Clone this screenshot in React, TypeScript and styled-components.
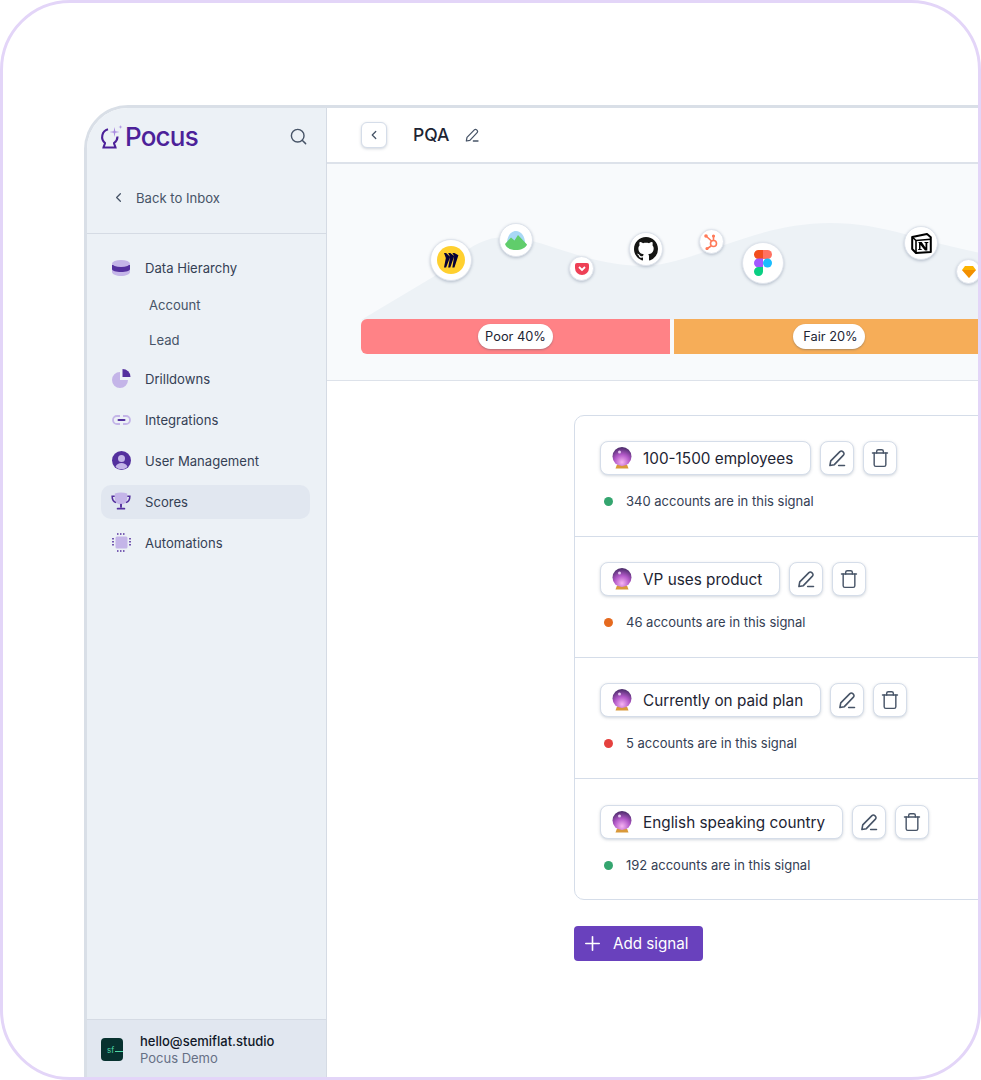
import { createGlobalStyle, styled, css } from 'styled-components';
import type { ReactNode } from 'react';
import { Search, ChevronLeft, Plus, Trash } from 'lucide-react';

const GlobalStyle = createGlobalStyle`
  html, body {
    margin: 0;
    padding: 0;
    background: #fff;
  }
  * {
    box-sizing: border-box;
  }
`;

const Frame = styled.div`
  width: 981px;
  height: 1080px;
  border: 3px solid #e3d5f8;
  border-radius: 70px;
  padding: 102px 0 0 81px;
  overflow: hidden;
  background: #fff;
  font-family: Inter, 'Liberation Sans', sans-serif;
`;

const AppWindow = styled.div`
  display: flex;
  height: 974px;
  width: 900px;
  border-top: 3px solid #d9dfe7;
  border-left: 3px solid #d9dfe7;
  border-top-left-radius: 44px;
  overflow: hidden;
`;

const Sidebar = styled.aside`
  width: 240px;
  flex-shrink: 0;
  display: flex;
  flex-direction: column;
  background: #ecf1f6;
  border-right: 1px solid #d5dbe4;
`;

const Brand = styled.div`
  display: flex;
  align-items: center;
  justify-content: space-between;
  height: 57px;
  padding: 0 18px 0 13px;
`;

const BrandName = styled.div`
  display: flex;
  align-items: center;
  gap: 1px;
  font-size: 26px;
  font-weight: 500;
  letter-spacing: -0.8px;
  color: #4c2199;
`;

const BackLink = styled.div`
  display: flex;
  align-items: center;
  gap: 10px;
  height: 69px;
  padding: 0 0 3px 24px;
  border-bottom: 1px solid #d5dbe4;
  font-size: 13.1px;
  color: #475467;
`;

const NavList = styled.nav`
  flex: 1;
  display: flex;
  flex-direction: column;
  padding-top: 16px;
`;

const NavRow = styled.div<{ $active?: boolean }>`
  display: flex;
  align-items: center;
  gap: 14px;
  height: 35px;
  margin: 0 16px 6px 14px;
  padding-left: 10px;
  border-radius: 10px;
  font-size: 13.1px;
  color: #344054;

  ${(p) =>
    p.$active &&
    css`
      height: 34px;
      margin-top: 1px;
      padding-bottom: 1px;
      background: #e1e7f0;
    `}
`;

const NavIcon = styled.span`
  width: 20px;
  height: 20px;
  display: flex;
  align-items: center;
  justify-content: center;
`;

const SubRow = styled.div`
  height: 35px;
  display: flex;
  align-items: center;
  padding-left: 62px;
  font-size: 13.1px;
  color: #475467;
`;

const SubGroup = styled.div`
  margin: -4px 0 4px;
`;

const Account = styled.div`
  display: flex;
  align-items: center;
  gap: 17px;
  height: 60px;
  padding-left: 14px;
  background: #e1e7f0;
  border-top: 1px solid #d5dbe4;
`;

const AccountLogo = styled.div`
  position: relative;
  width: 22px;
  height: 23px;
  border-radius: 4px;
  background: #07312f;
  color: #4fd8a8;
  font-size: 8px;
  display: flex;
  align-items: center;
  padding-left: 6px;

  &::after {
    content: '';
    position: absolute;
    left: 14px;
    right: 0;
    top: 13px;
    height: 1px;
    background: #4fd8a8;
  }
`;

const AccountText = styled.div`
  display: flex;
  flex-direction: column;
  gap: 1px;
  font-size: 13px;
  line-height: 16px;
  color: #101828;
  font-weight: 500;
`;

const AccountSub = styled.span`
  font-weight: 400;
  color: #667085;
`;

const Main = styled.main`
  flex: 1;
  min-width: 0;
  display: flex;
  flex-direction: column;
`;

const TopBar = styled.header`
  display: flex;
  align-items: center;
  height: 56px;
  padding-left: 34px;
  border-bottom: 2px solid #dde2ea;
  background: #fff;
`;

const IconButton = styled.button<{ $size: number }>`
  width: ${(p) => p.$size}px;
  height: ${(p) => p.$size}px;
  padding: 0;
  display: flex;
  align-items: center;
  justify-content: center;
  background: #fff;
  color: #475467;
  border: 1px solid #d5dde9;
  border-radius: ${(p) => (p.$size > 30 ? 8 : 6)}px;
  box-shadow: 0 1px 3px rgba(100, 116, 139, 0.3);
`;

const PageTitle = styled.h1`
  margin: -2px 15px 0 26px;
  font-size: 17.5px;
  font-weight: 500;
  color: #1d2433;
`;

const TitleEdit = styled.span`
  display: flex;
  color: #475467;
`;

const ScoreHero = styled.section`
  position: relative;
  height: 217px;
  background: #f8fafc;
  border-bottom: 1px solid #dde2ea;
`;

const Wave = styled.svg`
  position: absolute;
  left: 0;
  top: 0;
`;

const BarRow = styled.div`
  position: absolute;
  left: 34px;
  top: 155px;
  display: flex;
  gap: 4px;
  height: 35px;
`;

const BarSegment = styled.div<{ $color: string; $width: number; $first?: boolean }>`
  width: ${(p) => p.$width}px;
  display: flex;
  align-items: center;
  justify-content: center;
  background: ${(p) => p.$color};
  border-radius: ${(p) => (p.$first ? '6px 0 0 6px' : '0')};
`;

const BarLabel = styled.span<{ $padLeft: number }>`
  display: flex;
  align-items: center;
  height: 25px;
  padding: 0 7px 0 ${(p) => p.$padLeft}px;
  background: #fff;
  border-radius: 13px;
  font-size: 12.8px;
  color: #1d2433;
  box-shadow: 0 1px 2px rgba(71, 84, 103, 0.4);
`;

const LogoBubble = styled.div<{ $x: number; $y: number; $size: number }>`
  position: absolute;
  left: ${(p) => p.$x}px;
  top: ${(p) => p.$y}px;
  width: ${(p) => p.$size}px;
  height: ${(p) => p.$size}px;
  display: flex;
  align-items: center;
  justify-content: center;
  border-radius: 50%;
  background: #fff;
  border: 1px solid #dfe4ec;
  box-shadow: 0 1px 3px rgba(100, 116, 139, 0.4);
`;

const Content = styled.div`
  padding: 34px 0 0 247px;
`;

const SignalCard = styled.div`
  width: 500px;
  border: 1px solid #d5dde9;
  border-radius: 10px;
  background: #fff;
`;

const SignalBlock = styled.div`
  height: 121px;
  padding: 25px 25px 0;
  border-bottom: 1px solid #d5dde9;

  &:last-child {
    height: 120px;
    padding-top: 26px;
    border-bottom: none;
  }
`;

const SignalRow = styled.div`
  display: flex;
  gap: 9px;
`;

const SignalChip = styled.div`
  display: flex;
  align-items: center;
  height: 34px;
  padding: 0 17px 0 11px;
  gap: 11px;
  background: #fff;
  border: 1px solid #d5dde9;
  border-radius: 8px;
  box-shadow: 0 1px 3px rgba(100, 116, 139, 0.3);
  font-size: 15.32px;
  color: #1d2433;
`;

const CountLine = styled.div`
  display: flex;
  align-items: center;
  gap: 13px;
  margin-top: 17px;
  padding-left: 4px;
  height: 18px;
  font-size: 13px;
  color: #344054;
`;

const Dot = styled.span<{ $color: string }>`
  width: 9px;
  height: 9px;
  border-radius: 50%;
  background: ${(p) => p.$color};
`;

const AddButton = styled.button`
  display: flex;
  align-items: center;
  gap: 9px;
  height: 35px;
  margin-top: 26px;
  padding: 0 14px 0 7px;
  border: none;
  border-radius: 4px;
  background: #6941bd;
  color: #fff;
  font-family: inherit;
  font-size: 15.2px;
`;

function CrystalBall() {
  return (
    <svg width="20" height="22" viewBox="0 0 20 22">
      <defs>
        <radialGradient id="ball" cx="0.5" cy="0.8" r="0.8">
          <stop offset="0" stopColor="#f6b4f2" />
          <stop offset="0.5" stopColor="#b258c8" />
          <stop offset="1" stopColor="#472a66" />
        </radialGradient>
      </defs>
      <path d="M5 17.500h10l1.500 4h-13z" fill="#d9993a" />
      <circle cx="10" cy="9.500" r="9.500" fill="url(#ball)" />
      <circle cx="7.500" cy="5" r="1.500" fill="#e6c8f0" />
    </svg>
  );
}

function PenIcon({ size }: { size: number }) {
  return (
    <svg width={size} height={size} viewBox="0 0 24 24" fill="none" stroke="currentColor" strokeWidth="1.900" strokeLinecap="round" strokeLinejoin="round">
      <path d="M3.500 21l1-5.500L15.500 4.300a2.400 2.400 0 0 1 3.400 0l.8.8a2.400 2.400 0 0 1 0 3.400L8.800 20z" />
      <path d="M14 21h7" />
    </svg>
  );
}

const navIcons: Record<string, ReactNode> = {
  data: (
    <svg width="18" height="16" viewBox="0 0 18 16">
      <path d="M0 4v8c0 2 4 4 9 4s9-2 9-4V4z" fill="#c4b5e8" />
      <path d="M0 5v4c0 2 4 3 9 3s9-1 9-3V5z" fill="#54309e" />
      <ellipse cx="9" cy="3.500" rx="9" ry="3.500" fill="#c4b5e8" />
    </svg>
  ),
  drill: (
    <svg width="19" height="19" viewBox="0 0 19 19">
      <path d="M8 3a8 8 0 1 0 8 8H8z" fill="#c4b5e8" />
      <path d="M10.500 0a8 8 0 0 1 8 8h-8z" fill="#54309e" />
    </svg>
  ),
  link: (
    <svg width="19" height="10" viewBox="0 0 19 10" fill="none">
      <path d="M8 1H5a4 4 0 0 0 0 8h3M11 1h3a4 4 0 0 1 0 8h-3" stroke="#c4b5e8" strokeWidth="1.800" />
      <rect x="5.500" y="3.900" width="8" height="2.200" rx="1" fill="#54309e" />
    </svg>
  ),
  user: (
    <svg width="19" height="19" viewBox="0 0 19 19">
      <circle cx="9.500" cy="9.500" r="9.500" fill="#54309e" />
      <circle cx="9.500" cy="7.500" r="3.500" fill="#c4b5e8" />
      <path d="M3.500 16c1-3 3.500-4 6-4s5 1 6 4a9 9 0 0 1-12 0z" fill="#c4b5e8" />
    </svg>
  ),
  trophy: (
    <svg width="21" height="19" viewBox="0 0 21 19">
      <path d="M4 4H1.200c0 4 1.500 6 4.300 6.500M17 4h2.800c0 4-1.500 6-4.300 6.500" fill="none" stroke="#54309e" strokeWidth="1.600" />
      <path d="M4 1q6.500-2 13 0v5c0 4-3 6.500-6.500 6.500S4 10 4 6z" fill="#c4b5e8" />
      <rect x="9.500" y="12" width="2" height="4" fill="#54309e" />
      <rect x="6" y="16" width="9" height="2" rx="1" fill="#54309e" />
    </svg>
  ),
  chip: (
    <svg width="19" height="19" viewBox="0 0 19 19">
      <rect x="3.500" y="3.500" width="12" height="12" rx="1.500" fill="#c4b5e8" />
      <path d="M5 1h9M5 18h9M1 5v9M18 5v9" stroke="#54309e" strokeWidth="1.600" strokeDasharray="1.500 1.500" fill="none" />
    </svg>
  ),
};

const signals = [
  { name: '100-1500 employees', count: '340 accounts are in this signal', color: '#34a56f' },
  { name: 'VP uses product', count: '46 accounts are in this signal', color: '#e56a1f' },
  { name: 'Currently on paid plan', count: '5 accounts are in this signal', color: '#e5413e' },
  { name: 'English speaking country', count: '192 accounts are in this signal', color: '#34a56f' },
];

export default function App() {
  return (
    <Frame>
      <GlobalStyle />
      <AppWindow>
        <Sidebar>
          <Brand>
            <BrandName>
              <svg width="24" height="24" viewBox="0 0 24 24" fill="none">
                <path d="M8 4.200A8 8 0 0 0 5 18c0 1.500-1 2-1.500 4.500h12C15 20 14 19.500 14 18a8 8 0 0 0 3.500-6.500" stroke="#4c2199" strokeWidth="2.100" />
                <path d="M14.500 2l.8 4.200 4.200.8-4.200.8-.8 4.200-.8-4.200L9.500 7l4.200-.8z" fill="#a98be0" />
                <path d="M20.500 0l.4 1.600 1.600.4-1.600.4-.4 1.600-.4-1.600-1.600-.4 1.600-.4z" fill="#a98be0" />
              </svg>
              Pocus
            </BrandName>
            <Search size={19} color="#475467" strokeWidth={1.8} />
          </Brand>
          <BackLink>
            <ChevronLeft size={15} strokeWidth={2} />
            Back to Inbox
          </BackLink>
          <NavList>
            <NavRow><NavIcon>{navIcons.data}</NavIcon>Data Hierarchy</NavRow>
            <SubGroup>
              <SubRow>Account</SubRow>
              <SubRow>Lead</SubRow>
            </SubGroup>
            <NavRow><NavIcon>{navIcons.drill}</NavIcon>Drilldowns</NavRow>
            <NavRow><NavIcon>{navIcons.link}</NavIcon>Integrations</NavRow>
            <NavRow><NavIcon>{navIcons.user}</NavIcon>User Management</NavRow>
            <NavRow $active><NavIcon>{navIcons.trophy}</NavIcon>Scores</NavRow>
            <NavRow><NavIcon>{navIcons.chip}</NavIcon>Automations</NavRow>
          </NavList>
          <Account>
            <AccountLogo>sf</AccountLogo>
            <AccountText>
              hello@semiflat.studio
              <AccountSub>Pocus Demo</AccountSub>
            </AccountText>
          </Account>
        </Sidebar>
        <Main>
          <TopBar>
            <IconButton $size={26}><ChevronLeft size={14} strokeWidth={2.2} /></IconButton>
            <PageTitle>PQA</PageTitle>
            <TitleEdit><PenIcon size={16} /></TitleEdit>
          </TopBar>
          <ScoreHero>
            <Wave width="660" height="217" viewBox="0 0 660 217">
              <path d="M34 156L106 113C125 101 145 73 178 73C215 73 255 101 315 102C365 102 425 59 503 59C560 59 600 80 660 90V156Z" fill="#edf2f6" />
            </Wave>
            <BarRow>
              <BarSegment $color="#ff8286" $width={309} $first><BarLabel $padLeft={7}>Poor 40%</BarLabel></BarSegment>
              <BarSegment $color="#f6ad58" $width={310}><BarLabel $padLeft={10}>Fair 20%</BarLabel></BarSegment>
            </BarRow>
            <LogoBubble $x={103} $y={75} $size={42}>
              <svg width="28" height="28" viewBox="0 0 28 28">
                <circle cx="14" cy="14" r="14" fill="#ffd02f" />
                <g transform="translate(7 7) scale(0.6)">
                  <path d="M17.392 0H13.900L17 4.808 10.444 0H6.949l3.102 6.300L3.494 0H0l3.050 8.131L0 24h3.494L10.050 6.985 6.949 24h3.494L17 5.494 13.899 24h3.493L24 3.672 17.392 0z" fill="#050038" />
                </g>
              </svg>
            </LogoBubble>
            <LogoBubble $x={172} $y={59} $size={34}>
              <svg width="22" height="19" viewBox="0 0 22 19">
                <path d="M2 12C2 5 6 0 11 0s9 5 9 12z" fill="#a9d8f5" />
                <path d="M0 13l6-6.500 3.500 3L13 4l9 9.500C21 17 16 19 11 19S1 17 0 13z" fill="#60cd6b" />
              </svg>
            </LogoBubble>
            <LogoBubble $x={242} $y={92} $size={25}>
              <svg width="14" height="12" viewBox="0 0 14 12">
                <path d="M0 2a2 2 0 0 1 2-2h10a2 2 0 0 1 2 2v3a7 7 0 0 1-14 0z" fill="#ee4056" />
                <path d="M4 4l3 3 3-3" stroke="#fff" strokeWidth="1.800" fill="none" />
              </svg>
            </LogoBubble>
            <LogoBubble $x={302} $y={68} $size={34}>
              <svg width="24" height="24" viewBox="0 0 16 16">
                <path fill="#161614" d="M8 0C3.580 0 0 3.580 0 8c0 3.540 2.290 6.530 5.470 7.590.4.070.55-.17.55-.38 0-.19-.01-.82-.01-1.490-2.010.37-2.530-.49-2.690-.94-.09-.23-.48-.94-.82-1.130-.28-.15-.68-.52-.01-.53.630-.01 1.080.58 1.230.82.720 1.210 1.870.870 2.330.660.070-.52.280-.870.510-1.070-1.780-.2-3.640-.89-3.640-3.950 0-.870.310-1.590.820-2.150-.08-.2-.36-1.020.080-2.120 0 0 .670-.210 2.200.820.640-.180 1.320-.270 2-.270.680 0 1.360.090 2 .270 1.530-1.040 2.200-.820 2.200-.820.440 1.100.160 1.920.080 2.120.510.560.820 1.270.820 2.150 0 3.070-1.870 3.750-3.650 3.950.290.250.540.730.540 1.480 0 1.070-.010 1.930-.010 2.200 0 .210.150.460.550.380A8.013 8.013 0 0 0 16 8c0-4.420-3.580-8-8-8z" />
              </svg>
            </LogoBubble>
            <LogoBubble $x={372} $y={65} $size={25}>
              <svg width="15" height="16" viewBox="0 0 15 16" fill="none" stroke="#ff7a59" strokeWidth="1.600">
                <circle cx="9.500" cy="9.500" r="3" />
                <path d="M2 2l5.500 5M9.500 6.500V3M7 12l-3.500 2.500" />
                <circle cx="2" cy="2" r="1" fill="#ff7a59" />
                <circle cx="9.500" cy="2" r="0.800" fill="#ff7a59" />
                <circle cx="3" cy="14.500" r="0.800" fill="#ff7a59" />
              </svg>
            </LogoBubble>
            <LogoBubble $x={415} $y={78} $size={42}>
              <svg width="18" height="26" viewBox="0 0 18 26">
                <path d="M0 4.500A4.500 4.500 0 0 1 4.500 0H9v9H4.500A4.500 4.500 0 0 1 0 4.500z" fill="#f24e1e" />
                <path d="M9 0h4.500a4.500 4.500 0 0 1 0 9H9z" fill="#ff7262" />
                <path d="M0 13a4.500 4.500 0 0 1 4.500-4.500H9v9H4.500A4.500 4.500 0 0 1 0 13z" fill="#a259ff" />
                <circle cx="13.500" cy="13" r="4.500" fill="#1abcfe" />
                <path d="M0 21.500A4.500 4.500 0 0 1 4.500 17H9v4.500a4.500 4.500 0 0 1-9 0z" fill="#0acf83" />
              </svg>
            </LogoBubble>
            <LogoBubble $x={577} $y={62} $size={34}>
              <svg width="21" height="21" viewBox="0 0 21 21">
                <path d="M1.200 4L16 1l3.800 3.200V19L5 20l-3.800-4z" fill="#fff" stroke="#000" strokeWidth="2" strokeLinejoin="round" />
                <path d="M1.200 4L5 7.500l14.800-1.300M5 7.500V20" fill="none" stroke="#000" strokeWidth="1.600" />
                <path d="M7.500 9h3.200l3.800 5.500V10h-1V9h3.800v1h-1v7.500h-2.300L9.500 12v4h1.200v1H7.200v-1h.8v-6h-.5z" fill="#000" />
              </svg>
            </LogoBubble>
            <LogoBubble $x={629} $y={95} $size={25}>
              <svg width="14" height="12" viewBox="0 0 14 12">
                <path d="M3 0h8l3 4-7 8-7-8z" fill="#fdb300" />
                <path d="M0 4h14l-7 8z" fill="#ea6c00" opacity="0.5" />
              </svg>
            </LogoBubble>
          </ScoreHero>
          <Content>
            <SignalCard>
              {signals.map((s) => (
                <SignalBlock key={s.name}>
                  <SignalRow>
                    <SignalChip><CrystalBall />{s.name}</SignalChip>
                    <IconButton $size={34}><PenIcon size={20} /></IconButton>
                    <IconButton $size={34}><Trash size={20} strokeWidth={1.7} /></IconButton>
                  </SignalRow>
                  <CountLine><Dot $color={s.color} />{s.count}</CountLine>
                </SignalBlock>
              ))}
            </SignalCard>
            <AddButton><Plus size={23} strokeWidth={1.7} />Add signal</AddButton>
          </Content>
        </Main>
      </AppWindow>
    </Frame>
  );
}
